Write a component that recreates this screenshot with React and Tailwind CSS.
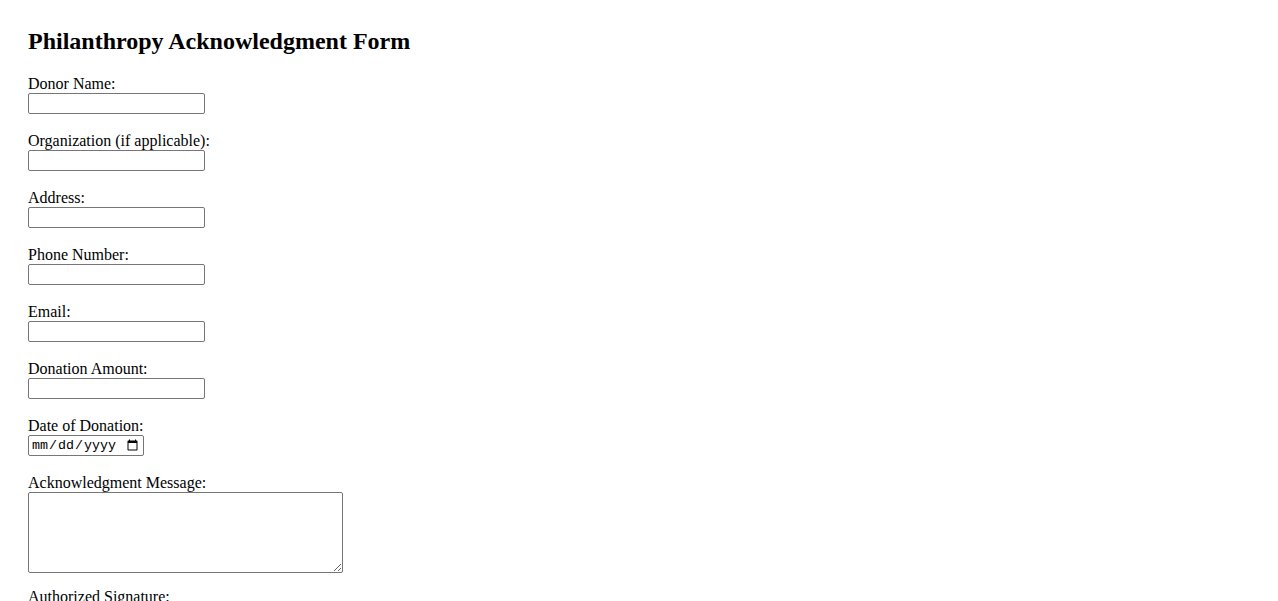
import React from 'react'

const fields = [
  { label: 'Donor Name:', type: 'text' },
  { label: 'Organization (if applicable):', type: 'text' },
  { label: 'Address:', type: 'text' },
  { label: 'Phone Number:', type: 'tel' },
  { label: 'Email:', type: 'email' },
  { label: 'Donation Amount:', type: 'text' },
]

function Field({ label, children, last }) {
  return (
    <div className={last ? 'flex flex-col items-start mb-[15px]' : 'flex flex-col items-start mb-[18px]'}>
      <label className="block h-[18px] leading-[17px] text-[16px]">{label}</label>
      {children}
    </div>
  )
}

export default function App() {
  return (
    <div className="min-h-screen bg-white pt-[27px] pl-[28px] text-black font-['Liberation_Serif','Times_New_Roman',serif]">
      <h2 className="text-[24px] leading-[28px] font-bold mb-[20px]">Philanthropy Acknowledgment Form</h2>
      <form className="flex flex-col">
        {fields.map((f) => (
          <Field key={f.label} label={f.label}>
            <input
              type={f.type}
              className="block w-[177px] h-[21px] border border-[#767676] rounded-[2px] px-[2px] py-[1px] text-[13.33px] font-['Liberation_Sans',Arial,sans-serif] bg-white"
            />
          </Field>
        ))}
        <Field label="Date of Donation:">
          <input
            type="date"
            className="block w-[116px] h-[21px] border border-[#767676] rounded-[2px] px-[2px] py-[1px] text-[13.33px] font-['Liberation_Mono','Courier_New',monospace] bg-white"
          />
        </Field>
        <Field label="Acknowledgment Message:" last>
          <textarea className="block w-[315px] h-[81px] border border-[#767676] rounded-[2px] px-[2px] py-[2px] text-[13.33px] font-['Liberation_Mono',monospace] bg-white resize" />
        </Field>
        <Field label="Authorized Signature:">
          <input
            type="text"
            className="block w-[177px] h-[21px] border border-[#767676] rounded-[2px] px-[2px] py-[1px] text-[13.33px] bg-white"
          />
        </Field>
      </form>
    </div>
  )
}
